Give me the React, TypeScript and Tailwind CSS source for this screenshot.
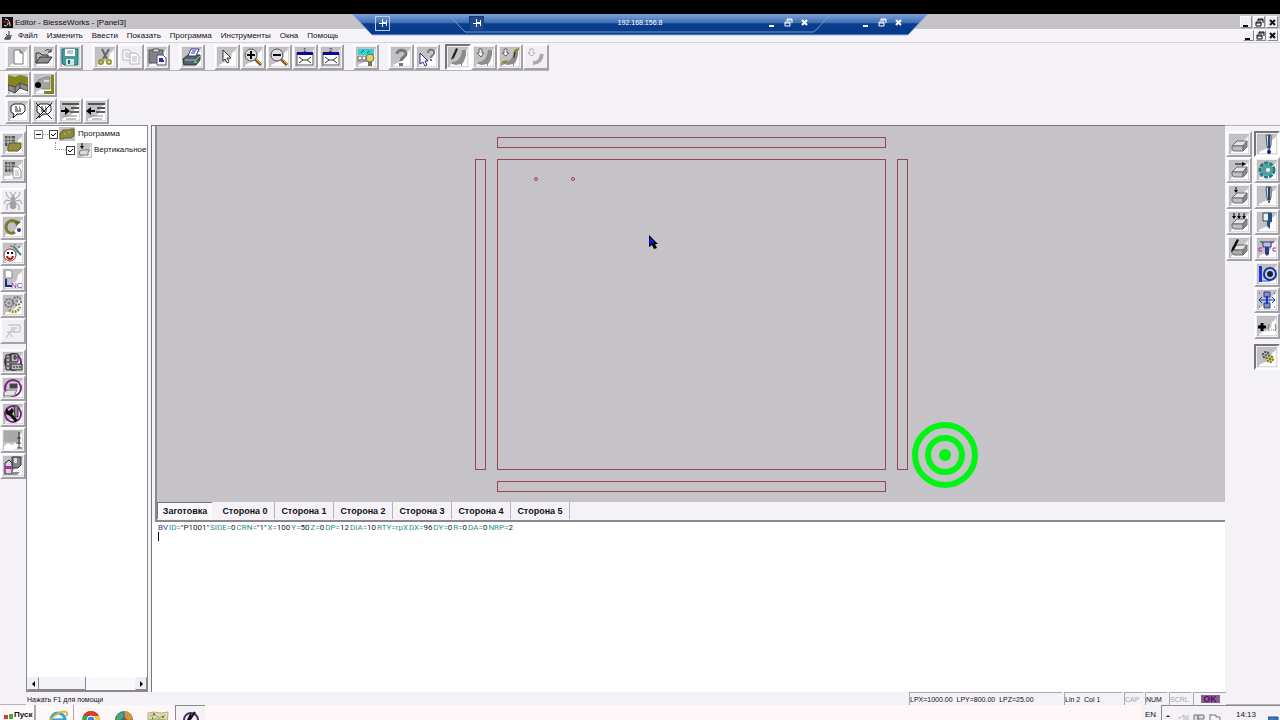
import type { ReactNode } from "react";

type ToolItem = {
  label: string;
  art: ReactNode;
  pressed?: boolean;
  plain?: boolean;
};

/* ---------- Shared pieces of the icon artwork ---------- */

const Block = ({ fill = "#bfbdbf" }: { fill?: string }) => (
  <g stroke="#6f6d70" strokeWidth="1">
    <path d="M3 12L8 7H18L14 12Z" fill="#e4e2e5" />
    <path d="M3 12H14V17H5L3 15Z" fill={fill} />
    <path d="M14 12L18 7V13L14 17Z" fill="#8b898b" />
  </g>
);

const Swoosh = () => (
  <path d="M4 15C9 15 13 12 14 3H18L18 8C17 12 16 15 14 17V19H13V17L8 18L4 17Z" fill="#8d8b8d" />
);

const Zoomer = ({ plus }: { plus?: boolean }) => (
  <g>
    <path d="M12 12L18 18" stroke="#8a4b12" strokeWidth="3" />
    <path d="M13 12L19 18" stroke="#e0b060" strokeWidth="1" />
    <circle cx="8" cy="8" r="6" fill="#dedcde" stroke="#555" strokeWidth="1" />
    <path d={plus ? "M4 8H12M8 4V12" : "M4 8H12"} stroke="#000" strokeWidth="2" />
  </g>
);

const ViewWindow = ({ n }: { n: string }) => (
  <g>
    <text x="8" y="5" fill="#222" className="font-['Liberation_Sans'] text-[6px]">
      {n}
    </text>
    <rect x="2" y="6" width="16" height="12" fill="#fff" stroke="#555" strokeWidth="1" />
    <rect x="2" y="5" width="16" height="3" fill="#0a0a9a" />
    <path d="M4 10L8 13L4 16M16 10L12 13L16 16M8 13H12" fill="none" stroke="#333" strokeWidth="1" />
  </g>
);

const Bubble = () => (
  <g>
    <path d="M3 5L6 3H14L17 5V10L14 13H9L5 17L6 13L3 11Z" fill="#fff" stroke="#222" strokeWidth="1" />
    <path d="M7 6H9M11 6H12M7 8H10M7 10H13M11 8H13" stroke="#222" strokeWidth="1" />
  </g>
);

const Indent = ({ left }: { left?: boolean }) => (
  <g strokeWidth="2">
    <path d="M2 3H19M11 7H19" stroke="#555" />
    <path d="M10 11H19" stroke="#666" />
    <path d="M3 15H17M6 18H16" stroke="#888" strokeWidth="1" />
    <path d="M1 10H9" stroke="#000" />
    <path d={left ? "M0 10L5 6V14Z" : "M10 10L5 6V14Z"} fill="#000" />
  </g>
);

const GridSheet = () => (
  <g>
    <rect x="2" y="2" width="10" height="10" fill="#555" />
    <path d="M2 5H12M2 8H12M5 2V12M8 2V12" stroke="#c8c6c8" strokeWidth="1" />
  </g>
);

const PurpleRing = () => (
  <circle cx="10" cy="10" r="8" fill="none" stroke="#7b1f86" strokeWidth="2" />
);

const Drill = ({ tip = "#234e8a" }: { tip?: string }) => (
  <g>
    <path d="M9 1H14V11L12 17L10 12Z" fill="#cfe0ea" stroke="#555" strokeWidth="1" />
    <path d="M12 1V14" stroke={tip} strokeWidth="2" />
  </g>
);

/* ---------- Toolbars ---------- */

const fileTools: ToolItem[][] = [
  [
    {
      label: "Новый",
      art: <path d="M6 3H12L15 6V17H6ZM12 3V6H15" fill="#fff" stroke="#777" strokeWidth="1" />,
    },
    {
      label: "Открыть",
      art: (
        <g stroke="#333" strokeWidth="1">
          <path d="M2 16V6H6L8 8H14V10" fill="#b5b3b5" />
          <path d="M2 16L6 10H18L14 16Z" fill="#8f8d8f" />
          <path d="M11 4C13 2 15 2 17 5M17 2V5H14" fill="none" />
        </g>
      ),
    },
    {
      label: "Сохранить",
      art: (
        <g>
          <path d="M2 2H18V18H4L2 16Z" fill="#3f9d9e" stroke="#1d6b6d" strokeWidth="1" />
          <path d="M5 2H15V9H5Z" fill="#fff" />
          <path d="M7 4H13M7 6H13" stroke="#888" strokeWidth="1" />
          <path d="M6 12H14V18H6Z" fill="#d8e6e6" />
          <path d="M8 13H10V17H8Z" fill="#1d6b6d" />
        </g>
      ),
    },
  ],
  [
    {
      label: "Вырезать",
      art: (
        <g fill="none">
          <path d="M7 2L12 12M14 2L8 12" stroke="#666" strokeWidth="2" />
          <circle cx="6" cy="15" r="2" stroke="#96962c" strokeWidth="2" />
          <circle cx="14" cy="15" r="2" stroke="#96962c" strokeWidth="2" />
        </g>
      ),
    },
    {
      label: "Копировать",
      plain: true,
      art: (
        <g fill="#fff" stroke="#b5b3b8" strokeWidth="1">
          <path d="M2 3H8L11 6V13H2Z" />
          <path d="M4 6H8M4 8H9M4 10H9" />
          <path d="M9 6H15L18 9V17H9ZM11 10H16M11 12H16M11 14H16" />
        </g>
      ),
    },
    {
      label: "Вставить",
      art: (
        <g>
          <path d="M2 3H16V16H2Z" fill="#858388" stroke="#555" strokeWidth="1" />
          <path d="M6 2H12V5H6Z" fill="#ddd" stroke="#555" strokeWidth="1" />
          <path d="M10 8H16L19 11V18H10Z" fill="#fff" stroke="#4a4a86" strokeWidth="1" />
          <path d="M12 12H16M12 14H17" stroke="#2d2d93" strokeWidth="2" />
        </g>
      ),
    },
  ],
  [
    {
      label: "Печать",
      art: (
        <g>
          <path d="M1 12L6 8H18V13L14 18H2Z" fill="#54636b" stroke="#333" strokeWidth="1" />
          <path d="M3 13H14L18 9" fill="none" stroke="#aac0c4" strokeWidth="1" />
          <path d="M6 9L9 2H17L14 9Z" fill="#fff" stroke="#2b3c8c" strokeWidth="1" />
          <path d="M10 4H14M9 6H13" stroke="#2b3c8c" strokeWidth="1" />
          <path d="M12 15H15" stroke="#5bc35b" strokeWidth="2" />
        </g>
      ),
    },
  ],
  [
    {
      label: "Выбор",
      art: <path d="M6 3L14 11H10L12 15L10 16L8 12L6 14Z" fill="#fff" stroke="#333" strokeWidth="1" />,
    },
    { label: "Увеличить", art: <Zoomer plus /> },
    { label: "Уменьшить", art: <Zoomer /> },
    { label: "Вид 1", art: <ViewWindow n="1" /> },
    { label: "Вид 2", art: <ViewWindow n="2" /> },
  ],
  [
    {
      label: "Станок",
      art: (
        <g>
          <path d="M2 2H18V8H2Z" fill="#2fd0d0" />
          <path d="M5 6L8 3M11 6L13 4" stroke="#155" strokeWidth="1" />
          <path d="M1 9H13V15H1Z" fill="#9b999b" />
          <path d="M3 11H5M7 11H9" stroke="#fff" strokeWidth="2" />
          <circle cx="14" cy="11" r="4" fill="#d4cf7c" stroke="#75723a" strokeWidth="1" />
          <path d="M12 15H16V19H12Z" fill="#76734e" />
        </g>
      ),
    },
  ],
  [
    {
      label: "Справка",
      art: (
        <g>
          <path d="M6 7C6 2 15 2 15 7C15 10 10 10 10 14" fill="none" stroke="#777" strokeWidth="3" />
          <path d="M8 16H12V19H8Z" fill="#777" />
        </g>
      ),
    },
    {
      label: "Что это?",
      art: (
        <g>
          <path d="M11 6C11 1 18 2 17 6C17 8 14 8 14 11" fill="none" stroke="#777" strokeWidth="2" />
          <path d="M13 13H15" stroke="#777" strokeWidth="2" />
          <path d="M3 6L11 14H8L10 18L8 19L6 15L3 17Z" fill="#fff" stroke="#2b2b93" strokeWidth="1" />
        </g>
      ),
    },
  ],
];

const drawTools: ToolItem[] = [
  {
    label: "Профиль",
    pressed: true,
    art: (
      <g>
        <Swoosh />
        <path d="M3 13L4 10L8 1L10 2L6 11Z" fill="#222" />
      </g>
    ),
  },
  {
    label: "Вход",
    art: (
      <g>
        <Swoosh />
        <path d="M5 2H8V6H10L7 10L3 6H5Z" fill="#eee" stroke="#666" strokeWidth="1" />
      </g>
    ),
  },
  {
    label: "Выход",
    art: (
      <g>
        <Swoosh />
        <path d="M4 2H7V6H9L6 9L2 6H4Z" fill="#eee" stroke="#666" strokeWidth="1" />
        <path d="M2 18L3 15L7 14M14 8L16 3L19 2" fill="none" stroke="#8f8a22" strokeWidth="2" />
        <path d="M15 5L14 11" stroke="#222" strokeWidth="1" />
      </g>
    ),
  },
  {
    label: "Дуга",
    plain: true,
    art: (
      <g>
        <path d="M7 16C13 16 15 13 16 7" fill="none" stroke="#aaa8ac" strokeWidth="4" />
        <path d="M4 2H7V6H9L6 9L2 6H4Z" fill="#fff" stroke="#b0aeb3" strokeWidth="1" />
      </g>
    ),
  },
];

const viewTools: ToolItem[] = [
  {
    label: "Заготовка",
    art: (
      <g>
        <path d="M0 1L7 3L12 1L20 3V12L12 9L7 13L0 11Z" fill="#85851b" />
        <path d="M0 11L7 13L12 9L20 12V17L12 14L7 19L0 16Z" fill="#8e8c8e" stroke="#444" strokeWidth="1" />
        <path d="M7 13V19M12 9V14" stroke="#444" strokeWidth="1" />
      </g>
    ),
  },
  {
    label: "Инструмент",
    art: (
      <g>
        <path d="M17 1H20V20H10V17H17Z" fill="#85851b" />
        <path d="M4 6L12 3H16V15H9L4 12Z" fill="#a5a3a5" stroke="#888" strokeWidth="1" />
        <path d="M10 6H15V8H10Z" fill="#ddd" />
        <circle cx="4" cy="11" r="3" fill="#000" />
      </g>
    ),
  },
];

const noteTools: ToolItem[] = [
  { label: "Комментарий", art: <Bubble /> },
  {
    label: "Убрать комментарий",
    art: (
      <g>
        <Bubble />
        <path d="M2 2L18 18M18 2L2 18" stroke="#222" strokeWidth="1" />
      </g>
    ),
  },
  { label: "Увеличить отступ", art: <Indent /> },
  { label: "Уменьшить отступ", art: <Indent left /> },
];

const sideTools: ToolItem[][] = [
  [
    {
      label: "Таблица",
      art: (
        <g>
          <GridSheet />
          <path d="M5 12L8 9H18V14L15 17H5Z" fill="#929040" stroke="#5d5c21" strokeWidth="1" />
        </g>
      ),
    },
    {
      label: "Список",
      art: (
        <g>
          <GridSheet />
          <path d="M10 7H15L18 10V18H10Z" fill="#fff" stroke="#888" strokeWidth="1" />
          <path d="M12 11H16M12 13H16M12 15H16" stroke="#aaa" strokeWidth="1" />
          <path d="M1 17C4 14 7 18 10 16V19H1Z" fill="#fff" />
        </g>
      ),
    },
  ],
  [
    {
      label: "Отладка",
      plain: true,
      art: (
        <g fill="#a3a1a6" stroke="#a3a1a6" strokeWidth="1">
          <ellipse cx="10" cy="14" rx="3" ry="4" />
          <circle cx="10" cy="8" r="2" />
          <circle cx="10" cy="5" r="1" />
          <path d="M8 8L4 5L3 1M12 8L16 5L17 1M8 10L3 9L1 13M12 10L17 9L19 13M8 11L4 14L4 19M12 11L16 14L16 19M9 4L7 1M11 4L13 1" fill="none" />
        </g>
      ),
    },
    {
      label: "Повтор",
      art: (
        <g>
          <path d="M14 6C9 1 3 5 3 10C3 15 8 18 12 15" fill="none" stroke="#7e7c32" strokeWidth="3" />
          <path d="M12 3L18 5L13 9Z" fill="#66642c" />
          <circle cx="16" cy="13" r="2" fill="#3a2c93" />
        </g>
      ),
    },
    {
      label: "Мастер",
      art: (
        <g>
          <circle cx="7" cy="12" r="6" fill="#fff" stroke="#8a3b3b" strokeWidth="1" />
          <path d="M4 13C5 17 9 17 10 13" fill="none" stroke="#b01717" strokeWidth="2" />
          <path d="M5 9V11M9 9V11" stroke="#000" strokeWidth="2" />
          <path d="M10 3L18 12" stroke="#3a8a93" strokeWidth="2" />
          <path d="M12 1V2M16 3V5M7 3H9" stroke="#b33" strokeWidth="1" />
        </g>
      ),
    },
    {
      label: "NC",
      art: (
        <g>
          <path d="M2 1H7L9 3V9H2Z" fill="#fff" stroke="#888" strokeWidth="1" />
          <path d="M3 10V17H9" fill="none" stroke="#1e2c8c" strokeWidth="2" />
          <text x="8" y="19" fill="#6c1d8c" className="font-['Liberation_Sans'] text-[8px]">
            NC
          </text>
        </g>
      ),
    },
    {
      label: "Оптимизация",
      art: (
        <g fill="none" strokeWidth="2">
          <circle cx="6" cy="8" r="4" stroke="#77757a" strokeDasharray="2 1" />
          <circle cx="6" cy="8" r="1" stroke="#77757a" strokeWidth="1" />
          <circle cx="14" cy="6" r="4" stroke="#77757a" strokeDasharray="2 1" />
          <circle cx="14" cy="6" r="1" stroke="#77757a" strokeWidth="1" />
          <path d="M6 15C10 18 15 17 17 12" stroke="#98962f" strokeWidth="3" strokeDasharray="2 1" />
        </g>
      ),
    },
    {
      label: "Симуляция",
      plain: true,
      art: (
        <g fill="none" stroke="#b6b4b9" strokeWidth="1">
          <path d="M5 4H17V11H8M8 7H14M8 9H12" />
          <path d="M8 10L3 17M6 12L10 16M4 11L8 11" />
        </g>
      ),
    },
  ],
  [
    {
      label: "База инструментов",
      art: (
        <g>
          <PurpleRing />
          <path d="M3 3H7V18H3ZM8 2H15V10H8ZM8 12H19V18H8Z" fill="#bbb9bb" stroke="#222" strokeWidth="1" />
          <path d="M4 6H6M4 10H6M4 14H6M11 4H13V7H11ZM11 14V16M14 14V16M17 14V16" fill="none" stroke="#222" strokeWidth="1" />
        </g>
      ),
    },
    {
      label: "Станция",
      art: (
        <g>
          <PurpleRing />
          <path d="M6 5H15V11H6Z" fill="#444" stroke="#ddd" strokeWidth="1" />
          <path d="M1 14L5 12H14L11 18H1Z" fill="#e5e3e5" stroke="#777" strokeWidth="1" />
        </g>
      ),
    },
    {
      label: "Настройка",
      art: (
        <g>
          <PurpleRing />
          <path d="M3 4L6 7L9 4L11 7L9 10L15 16L12 18L7 12L3 10Z" fill="#111" />
          <path d="M11 2H15V13H12Z" fill="#8f8d8f" stroke="#333" strokeWidth="1" />
        </g>
      ),
    },
    {
      label: "Разметка",
      art: (
        <g>
          <path d="M1 1H17V12H1Z" fill="#aaa8ab" />
          <path d="M1 16L5 13L11 16V20H1Z" fill="#fff" />
          <path d="M16 2V18M14 8H18M13 13H18M14 18H19" stroke="#333" strokeWidth="1" />
        </g>
      ),
    },
    {
      label: "Экспорт",
      art: (
        <g>
          <path d="M9 1H18V9L15 12H9Z" fill="#858388" stroke="#333" strokeWidth="1" />
          <path d="M11 2H14V7H11Z" fill="#ddd" />
          <path d="M2 7L6 4L9 7V18H2Z" fill="#d8d6d9" stroke="#222" strokeWidth="1" />
          <path d="M2 10H8V13H2Z" fill="#c01fc0" />
          <path d="M10 16H17L14 19H9Z" fill="#8d8b8d" />
        </g>
      ),
    },
  ],
];

const faceTools: ToolItem[] = [
  { label: "Деталь", art: <Block /> },
  {
    label: "Сверление сбоку",
    art: (
      <g>
        <Block />
        <path d="M6 4H14" stroke="#000" strokeWidth="1" />
        <path d="M13 2L17 4L13 6Z" fill="#000" />
      </g>
    ),
  },
  {
    label: "Вертикальное сверление",
    art: (
      <g>
        <Block />
        <path d="M7 1V5" stroke="#000" strokeWidth="1" />
        <path d="M5 4H9L7 7Z" fill="#000" />
      </g>
    ),
  },
  {
    label: "Групповое сверление",
    art: (
      <g>
        <Block />
        <path d="M5 1V5M10 1V5M15 1V5" stroke="#000" strokeWidth="1" />
        <path d="M3 4H7L5 7ZM8 4H12L10 7ZM13 4H17L15 7Z" fill="#000" />
      </g>
    ),
  },
  {
    label: "Фрезерование",
    art: (
      <g>
        <Block fill="#aaa8aa" />
        <path d="M2 14L3 10L8 1L10 2L5 12Z" fill="#111" />
      </g>
    ),
  },
];

const cutterTools: ToolItem[] = [
  {
    label: "Сверло",
    pressed: true,
    art: (
      <g>
        <Drill />
        <circle cx="12" cy="18" r="2" fill="#15158f" />
      </g>
    ),
  },
  {
    label: "Пила",
    art: (
      <g>
        <circle cx="10" cy="10" r="7" fill="none" stroke="#237b7e" strokeWidth="3" strokeDasharray="4 1" />
        <circle cx="10" cy="10" r="6" fill="#4f9fa3" />
        <circle cx="11" cy="10" r="2" fill="#fff" />
      </g>
    ),
  },
  { label: "Фреза", art: <Drill tip="#1d4b6d" /> },
  {
    label: "Концевая фреза",
    art: (
      <g>
        <path d="M6 1H14V9H6Z" fill="#e8eef2" stroke="#444" strokeWidth="1" />
        <path d="M11 1H15V10H13V17L10 14V9H11Z" fill="#1f4f86" />
      </g>
    ),
  },
  {
    label: "Агрегат",
    art: (
      <g>
        <path d="M6 4H14V9H6Z" fill="#bcc2dc" stroke="#2e3c8c" strokeWidth="1" />
        <path d="M8 9H12V16L10 18L8 16Z" fill="#2e3c8c" />
        <path d="M3 4H6M14 4H17" stroke="#333" strokeWidth="1" />
        <path d="M5 10H2V13H5M19 10H16V13H19" fill="none" stroke="#b01fb0" strokeWidth="1" />
      </g>
    ),
  },
  {
    label: "Упор",
    art: (
      <g>
        <path d="M2 2H5V18H2Z" fill="#1236d8" />
        <circle cx="13" cy="10" r="6" fill="#cfcdd2" stroke="#1236a8" strokeWidth="2" />
        <circle cx="13" cy="10" r="3" fill="#16203c" />
        <path d="M5 17H13" stroke="#1236d8" strokeWidth="1" />
      </g>
    ),
  },
  {
    label: "Зажим",
    art: (
      <g>
        <path d="M7 2H13V7H7ZM7 13H13V18H7Z" fill="#8592ae" stroke="#243c9c" strokeWidth="1" />
        <path d="M9 6H11V14H9Z" fill="#1236c8" />
        <path d="M3 10H17" stroke="#1236c8" strokeWidth="1" />
        <path d="M5 7L2 10L5 13M15 7L18 10L15 13" fill="none" stroke="#1236c8" strokeWidth="1" />
        <path d="M2 3H3M17 3H18M2 17H3M17 17H18" stroke="#1236c8" strokeWidth="1" />
      </g>
    ),
  },
  {
    label: "Добавить",
    art: (
      <g>
        <path d="M1 11H9M5 7V15" stroke="#000" strokeWidth="3" />
        <path d="M12 8L11 12L12 15M18 8L19 12L18 15M14 14H15M16 14H17" fill="none" stroke="#777" strokeWidth="1" />
      </g>
    ),
  },
];

const gearTool: ToolItem = {
  label: "Параметры",
  pressed: true,
  art: (
    <g fill="none" strokeWidth="2">
      <circle cx="9" cy="8" r="3" fill="#ddd" stroke="#444" strokeDasharray="2 1" />
      <circle cx="13" cy="12" r="3" fill="#e9e67a" stroke="#7e7b1c" strokeDasharray="2 1" />
      <circle cx="9" cy="8" r="1" stroke="#444" strokeWidth="1" />
      <circle cx="13" cy="12" r="1" stroke="#555310" strokeWidth="1" />
    </g>
  ),
};

function Tool({ label, art, pressed, plain }: ToolItem) {
  const edge = pressed
    ? "border-t-[#77757a] border-l-[#77757a] border-r-white border-b-white"
    : "border-t-[#fcfcfd] border-l-[#fcfcfd] border-r-[#a3a1a6] border-b-[#a3a1a6]";
  return (
    <button
      type="button"
      aria-label={label}
      title={label}
      className={`box-border flex h-[26px] w-[26px] shrink-0 items-center justify-center border-2 bg-[#f1eff4] ${edge}`}
    >
      <svg viewBox="0 0 20 20" className="h-5 w-5">
        {!plain && (
          <g>
            <rect width="20" height="20" fill="#fdfdfd" />
            <path d="M0 0H20L18 4L15 6L14 11L11 14L6 16L2 18V20H0Z" fill="#c3c1c4" />
            <path d="M0 20V0H20V20Z" fill="none" stroke="#b9b7bb" strokeWidth="1" />
          </g>
        )}
        {art}
      </svg>
    </button>
  );
}

function ToolRow({ items }: { items: ToolItem[] }) {
  return (
    <div className="flex">
      {items.map((t) => (
        <Tool key={t.label} {...t} />
      ))}
    </div>
  );
}

/* ---------- Window chrome ---------- */

const glyphs: Record<string, string> = {
  Свернуть: "M1 8H6",
  Развернуть: "M3 1H8V5M3 1V3M1 4H6V8H1ZM3 2H8M1 5H6",
  Закрыть: "M2 2L7 7M7 2L2 7",
};

function WindowButtons({ small }: { small?: boolean }) {
  return (
    <div className="flex items-center gap-px">
      {Object.entries(glyphs).map(([label, d]) => (
        <button
          key={label}
          type="button"
          aria-label={label}
          className={`flex items-center justify-center border border-t-white border-l-white border-r-[#8a888c] border-b-[#8a888c] bg-[#f1eff4] ${small ? "h-[11px] w-[11px]" : "h-3 w-3"}`}
        >
          <svg viewBox="0 0 9 9" className="h-[9px] w-[9px]">
            <path d={d} fill="none" stroke="#111" strokeWidth={label === "Развернуть" ? 1 : 2} />
          </svg>
        </button>
      ))}
    </div>
  );
}

function RemoteButtons() {
  return (
    <div className="flex items-center gap-1.5">
      {Object.entries(glyphs).map(([label, d]) => (
        <button key={label} type="button" aria-label={label} className="h-[10px] w-[10px]">
          <svg viewBox="0 0 10 10" className="h-[10px] w-[10px]">
            <path d={d} fill="none" stroke="#fff" strokeWidth={label === "Развернуть" ? 1 : 2} />
          </svg>
        </button>
      ))}
    </div>
  );
}

function PinButton({ framed }: { framed?: boolean }) {
  return (
    <button
      type="button"
      aria-label="Закрепить"
      className={`flex h-[15px] w-[15px] items-center justify-center border ${framed ? "border-[#b9cbe6]" : "border-[#173a78] bg-[#1f4a90]"}`}
    >
      <svg viewBox="0 0 10 10" className="h-[10px] w-[10px]" shapeRendering="crispEdges">
        <path d="M1 5H4V6H1ZM4 1H5V9H4ZM5 4H9V6H5ZM8 2H9V8H8Z" fill="#fff" />
      </svg>
    </button>
  );
}

function RemoteBar() {
  return (
    <div className="absolute top-[14px] left-1/2 z-10 flex h-[22px] w-[576px] -translate-x-1/2">
      <svg viewBox="0 0 576 22" className="absolute inset-0 h-[22px] w-[576px]">
        <defs>
          <linearGradient id="bar" x1="0" y1="0" x2="0" y2="1">
            <stop offset="0" stopColor="#7ea3d8" />
            <stop offset="0.43" stopColor="#3d6cb3" />
            <stop offset="0.46" stopColor="#0a3f8f" />
            <stop offset="1" stopColor="#053a8c" />
          </linearGradient>
        </defs>
        <path d="M0 0H576L556 21H20Z" fill="url(#bar)" />
        <path d="M0 0L20 21H556L576 0" fill="none" stroke="#9db4d6" strokeWidth="1" />
        <path d="M96 0L113 18H462L479 0" fill="none" stroke="#7d9cc9" strokeWidth="1" />
      </svg>
      <div className="relative flex h-[18px] w-full items-center pr-6 pl-[23px]">
        <PinButton framed />
        <div className="ml-[79px] flex w-[341px] items-center">
          <PinButton />
          <span className="flex-1 pl-7 text-center text-[7px] leading-[10px] text-white">192.168.156.8</span>
          <RemoteButtons />
        </div>
        <div className="ml-auto">
          <RemoteButtons />
        </div>
      </div>
    </div>
  );
}

const menus = ["Файл", "Изменить", "Ввести", "Показать", "Программа", "Инструменты", "Окна", "Помощь"];

function Header() {
  return (
    <header>
      <div className="h-[14px] bg-black" />
      <div className="flex h-[15px] items-center bg-[#c5c3c7] px-0.5 pt-px">
        <svg viewBox="0 0 11 11" className="h-[11px] w-[11px]">
          <rect width="11" height="11" fill="#111" />
          <path d="M3 2C6 2 8 4 8 9M2 8C4 10 6 8 6 6" fill="none" stroke="#fff" strokeWidth="1" />
          <path d="M1 5H7" stroke="#d22" strokeWidth="1" />
        </svg>
        <h1 className="ml-0.5 flex-1 text-[8px] leading-[11px]">Editor - BiesseWorks - [Panel3]</h1>
        <WindowButtons />
      </div>
      <div className="flex h-[13px] items-center bg-[#f6f4f9] pr-0.5 pl-[3px]">
        <svg viewBox="0 0 10 10" className="h-[10px] w-[10px]">
          <path d="M1 8L4 4H9L7 9H2Z" fill="#777" />
          <path d="M6 0V5M3 3L5 5M2 7H8" stroke="#333" strokeWidth="1" />
        </svg>
        <nav className="ml-[5px] flex flex-1 gap-[9px]">
          {menus.map((m) => (
            <button key={m} type="button" className="text-[8px] leading-[10px]">
              {m}
            </button>
          ))}
        </nav>
        <WindowButtons small />
      </div>
    </header>
  );
}

function Toolbars() {
  return (
    <div className="border-t border-[#d5d3d8] bg-[#f4f2f7] pb-px">
      <div className="flex h-7 w-[549px] items-center gap-[5px] border-b border-[#b5b3b8] pl-[5px]">
        <div className="flex gap-[9px]">
          {fileTools.map((group) => (
            <ToolRow key={group[0].label} items={group} />
          ))}
        </div>
        <ToolRow items={drawTools} />
      </div>
      <div className="flex h-[27px] items-start pl-[5px]">
        <ToolRow items={viewTools} />
      </div>
      <div className="flex h-[26px] items-start pl-[5px]">
        <ToolRow items={noteTools} />
      </div>
    </div>
  );
}

/* ---------- Program tree ---------- */

function TreeCheck({ id }: { id: string }) {
  return (
    <span className="relative flex h-[9px] w-[9px] shrink-0">
      <input
        id={id}
        type="checkbox"
        defaultChecked
        className="peer h-[9px] w-[9px] appearance-none border border-[#444] bg-white"
      />
      <svg viewBox="0 0 9 9" className="pointer-events-none absolute inset-0 hidden h-[9px] w-[9px] peer-checked:block">
        <path d="M2 4L4 6L7 3" fill="none" stroke="#000" strokeWidth="1" />
      </svg>
    </span>
  );
}

function ProgramTree() {
  return (
    <aside className="flex w-[122px] shrink-0 flex-col border-t border-r border-b-2 border-l border-[#8a888c] bg-white">
      <ul className="flex-1 overflow-hidden text-[8px] leading-4">
        <li>
          <div className="flex h-4 items-center pl-[7px]">
            <button
              type="button"
              aria-label="Свернуть ветвь"
              className="flex h-[9px] w-[9px] items-center justify-center border border-[#8a888c]"
            >
              <span className="h-px w-[5px] bg-black" />
            </button>
            <span className="mr-px w-[5px] border-t border-dotted border-[#999]" />
            <TreeCheck id="node-program" />
            <svg viewBox="0 0 16 14" className="ml-px h-[14px] w-4">
              <rect width="16" height="14" fill="#c5c3c7" />
              <path d="M1 6L4 3H10L12 2H15V9L12 11H6L4 12H1Z" fill="#8a8a3a" stroke="#63632a" strokeWidth="1" />
              <path d="M5 7H7M9 5H11" stroke="#c2c284" strokeWidth="1" />
            </svg>
            <label htmlFor="node-program" className="ml-[3px]">
              Программа
            </label>
          </div>
          <ul>
            <li className="flex h-4 items-center pl-7">
              <span className="mb-2 h-2 w-[11px] shrink-0 border-b border-l border-dotted border-[#999]" />
              <TreeCheck id="node-vertical" />
              <svg viewBox="0 0 15 15" className="ml-0.5 h-[15px] w-[15px] shrink-0">
                <rect width="15" height="15" fill="#c5c3c7" />
                <path d="M14 1V14H5L12 8Z" fill="#eee" />
                <path d="M2 9L5 7H13L11 9V12H3Z" fill="#ddd" stroke="#777" strokeWidth="1" />
                <path d="M5 0V4" stroke="#000" strokeWidth="1" />
                <path d="M3 3H7L5 6Z" fill="#000" />
              </svg>
              <label htmlFor="node-vertical" className="ml-0.5 whitespace-nowrap">
                Вертикальное
              </label>
            </li>
          </ul>
        </li>
      </ul>
      <div className="flex h-[13px] bg-[#f9f8fb]">
        <button
          type="button"
          aria-label="Влево"
          className="flex w-3 items-center justify-center border border-transparent border-r-[#8a888c] border-b-[#8a888c] bg-[#f1eff4]"
        >
          <svg viewBox="0 0 5 6" className="h-[6px] w-[5px]">
            <path d="M4 0V6L1 3Z" />
          </svg>
        </button>
        <div className="w-[47px] border-r border-b border-[#8a888c] bg-[#f4f2f7]" />
        <button
          type="button"
          aria-label="Вправо"
          className="ml-auto flex w-3 items-center justify-center border border-transparent border-r-[#8a888c] border-b-[#8a888c] bg-[#f1eff4]"
        >
          <svg viewBox="0 0 5 6" className="h-[6px] w-[5px]">
            <path d="M1 0V6L4 3Z" />
          </svg>
        </button>
      </div>
    </aside>
  );
}

/* ---------- Drawing and code ---------- */

function PanelDrawing() {
  return (
    <svg viewBox="0 0 432 356" className="mt-[10px] h-[356px] w-[432px] overflow-visible">
      {/* half-unit shift keeps the hairlines on whole pixels */}
      <g fill="none" stroke="#9a4650" strokeWidth="1" transform="translate(0.5 0.5)">
        <rect x="22" y="1" width="388" height="10" />
        <rect x="0" y="23" width="10" height="310" />
        <rect x="22" y="23" width="388" height="310" />
        <rect x="422" y="23" width="10" height="310" />
        <rect x="22" y="345" width="388" height="10" />
      </g>
      <g fill="none" stroke="#a03a6c" strokeWidth="1">
        <circle cx="61" cy="43" r="1.5" />
        <circle cx="98" cy="43" r="1.5" />
      </g>
      {/* mouse pointer */}
      <path d="M174 99V111L177 109L179 113L182 112L180 108H183Z" fill="#000" />
      <path d="M175 102V108L177 107L179 106Z" fill="#1414e0" stroke="#1414e0" strokeWidth="1" />
      {/* click marker */}
      <g fill="none" stroke="#00f514" strokeWidth="6">
        <circle cx="470" cy="319" r="30" />
        <circle cx="470" cy="319" r="17" />
        <circle cx="470" cy="319" r="6" fill="#00f514" stroke="none" />
      </g>
    </svg>
  );
}

const sides = ["Заготовка", "Сторона 0", "Сторона 1", "Сторона 2", "Сторона 3", "Сторона 4", "Сторона 5"];

const params: [string, string][] = [
  ["ID", '"P1001"'],
  ["SIDE", "0"],
  ["CRN", '"1"'],
  ["X", "100"],
  ["Y", "50"],
  ["Z", "0"],
  ["DP", "12"],
  ["DIA", "10"],
  ["RTY", "rpX"],
  ["DX", "96"],
  ["DY", "0"],
  ["R", "0"],
  ["DA", "0"],
  ["NRP", "2"],
];

function Workspace() {
  return (
    <main className="ml-[3px] flex min-w-0 flex-1 flex-col border-t border-l border-[#77757a] bg-[#f4f2f7]">
      <section className="ml-[3px] flex h-[376px] justify-center overflow-hidden border-l-2 border-[#8a888c] bg-[#c5c3c7]">
        <PanelDrawing />
      </section>
      <div role="tablist" className="ml-[3px] flex h-5 items-start border-b-2 border-l-2 border-[#8a888c]">
        {sides.map((s, i) => (
          <button
            key={s}
            type="button"
            role="tab"
            aria-selected={i === 0}
            className={
              i === 0
                ? "mr-1 h-[17px] w-[55px] border-t border-l border-[#77757a] bg-[#faf9fc] text-center text-[9px] leading-4 font-bold"
                : "h-[17px] w-[59px] border-r border-[#b5b3b8] text-center text-[9px] leading-4 font-bold"
            }
          >
            {s}
          </button>
        ))}
      </div>
      <div className="flex-1 bg-white pt-px pl-1.5 font-['Roboto','Liberation_Sans',sans-serif] text-[8px] leading-[9px] text-[#222]">
        <p className="flex gap-px whitespace-nowrap">
          <span className="text-[#4530a8]">BV</span>
          {params.map(([key, value]) => (
            <span key={key}>
              <span className="text-[#2b9090]">{key}=</span>
              {key === "RTY" ? <span className="text-[#2b9090]">{value}</span> : value}
            </span>
          ))}
        </p>
        <div className="h-[9px] w-px bg-black" />
      </div>
    </main>
  );
}

function StatusBar() {
  return (
    <footer className="flex h-[13px] shrink-0 items-stretch bg-[#f4f2f7] text-[7px] leading-[13px] whitespace-nowrap">
      <div className="w-[26px] border-b border-[#b5b3b8]" />
      <p className="flex-1 pt-px pl-px">Нажать F1 для помощи</p>
      <p className="mr-0.5 w-[153px] border-t border-l border-[#aaa8ad]">LPX=1000.00&nbsp; LPY=800.00&nbsp; LPZ=25.00</p>
      <p className="mr-0.5 w-[58px] border-t border-l border-[#aaa8ad]">Lin 2&nbsp; Col 1</p>
      <p className="mr-0.5 w-[19px] border-t border-l border-[#aaa8ad] text-[#aaa8ad]">CAP</p>
      <p className="mr-0.5 w-[22px] border-t border-l border-[#aaa8ad]">NUM</p>
      <p className="mr-0.5 w-[22px] border-t border-l border-[#aaa8ad] text-[#aaa8ad]">SCRL</p>
      <div className="flex w-[33px] items-center justify-center border-t border-l border-[#aaa8ad]">
        <span className="h-2 w-[19px] bg-[#85638c] text-center text-[9px] leading-2 font-bold text-[#5c0a6c]">OK</span>
      </div>
      <div className="w-[54px] border-b border-[#b5b3b8]" />
    </footer>
  );
}

function Taskbar() {
  return (
    <div className="flex h-[15px] shrink-0 items-start overflow-hidden bg-[#fdf8f7] text-[8px] leading-[9px]">
      <button type="button" className="flex h-[15px] w-9 shrink-0 items-start gap-px border-r-2 border-[#aaa8ad] pt-[5px] pl-1">
        <svg viewBox="0 0 9 9" className="mt-1 h-[9px] w-[9px] shrink-0">
          <path d="M0 1H4V5H0Z" fill="#d93a2c" />
          <path d="M5 0H9V5H5Z" fill="#3fae3f" />
        </svg>
        <span className="font-bold">Пуск</span>
      </button>
      <button type="button" aria-label="Internet Explorer" className="h-6 w-[38px] shrink-0 border-r border-[#aaa8ad] pt-[5px] pl-3">
        <svg viewBox="0 0 20 20" className="h-5 w-5">
          <circle cx="10" cy="10" r="7" fill="none" stroke="#2fa3dc" strokeWidth="3" />
          <path d="M4 10H16" stroke="#2fa3dc" strokeWidth="3" />
          <path d="M1 13C3 7 13 0 18 2C20 3 19 5 18 6" fill="none" stroke="#e3b43c" strokeWidth="2" />
        </svg>
      </button>
      <button type="button" aria-label="Chrome" className="h-6 w-8 shrink-0 pt-[5px] pl-[7px]">
        <svg viewBox="0 0 20 20" className="h-5 w-5">
          <circle cx="10" cy="10" r="9" fill="#3da64b" />
          <path d="M2 6A9 9 0 0 1 18 6H10Z" fill="#d93a2c" />
          <path d="M18 6A9 9 0 0 1 10 19L14 10L10 6Z" fill="#f0c536" />
          <circle cx="10" cy="10" r="4" fill="#4285d8" stroke="#fff" strokeWidth="1" />
        </svg>
      </button>
      <button type="button" aria-label="Глобус" className="h-6 w-8 shrink-0 pt-[5px] pl-2">
        <svg viewBox="0 0 20 20" className="h-5 w-5">
          <circle cx="10" cy="10" r="9" fill="#267b9c" />
          <path d="M10 1C15 1 18 4 19 9L13 11L11 7Z" fill="#d2933a" />
          <path d="M3 5L8 2L10 6L6 10L2 12Z" fill="#4fa86c" />
          <path d="M9 8L14 10L11 16Z" fill="#ab3f2b" />
        </svg>
      </button>
      <button type="button" aria-label="Карта" className="h-6 w-[37px] shrink-0 pt-[5px] pl-[9px]">
        <svg viewBox="0 0 22 18" className="h-[18px] w-[22px]">
          <path d="M1 2L7 1L14 2L21 1L20 16H1Z" fill="#ddd9a8" stroke="#b5b28a" strokeWidth="1" />
          <path d="M3 5L8 4L12 7L18 4M2 9L9 8L19 9" fill="none" stroke="#8cae86" strokeWidth="1" />
          <path d="M6 3H8M15 6H17M5 7H6" stroke="#cf5a45" strokeWidth="2" />
        </svg>
      </button>
      <button type="button" aria-label="BiesseWorks" className="h-6 w-[30px] shrink-0 border-t border-l border-[#8a888c] bg-[#f4f2f7] pt-1 pl-1.5">
        <svg viewBox="0 0 18 18" className="h-[18px] w-[18px]">
          <circle cx="9" cy="9" r="7" fill="none" stroke="#5b2a6c" strokeWidth="2" />
          <path d="M5 11L9 3M7 10L13 1" fill="none" stroke="#111" strokeWidth="2" />
        </svg>
      </button>
      <div className="ml-auto flex h-[15px] shrink-0 items-start bg-[#f4f2f7] pl-1">
        <span className="w-4 pt-[5px]">EN</span>
        <div className="flex h-[15px] items-start gap-2 border-t border-l border-[#8a888c] pt-1 pl-1">
          <svg viewBox="0 0 60 10" className="mt-1 mr-0.5 h-[10px] w-[60px]">
            <path d="M0 3L2 1L4 3Z" fill="#222" />
            <path d="M12 4H14L18 1V9L14 6M20 2V6M22 1V7" fill="none" stroke="#b5b3b8" strokeWidth="1" />
            <path d="M28 1H32V9H28ZM32 1H38V5H32Z" fill="#ddd" stroke="#777" strokeWidth="1" />
            <path d="M44 0V9M44 1H50V3H54V9" fill="none" stroke="#777" strokeWidth="1" />
          </svg>
          <time>14:13</time>
          <svg viewBox="0 0 12 10" className="mt-1.5 ml-1 h-[10px] w-3">
            <path d="M0 1H10V10H0Z" fill="#3f73b8" stroke="#234e8a" strokeWidth="1" />
          </svg>
        </div>
      </div>
    </div>
  );
}

export default function App() {
  return (
    <div className="relative flex h-screen flex-col overflow-hidden bg-[#f4f2f7] font-['Liberation_Sans',Arial,sans-serif] text-[#111]">
      <Header />
      <RemoteBar />
      <Toolbars />
      <div className="flex min-h-0 flex-1">
        {/* Left tool strip */}
        <div className="flex w-[26px] shrink-0 flex-col gap-[5px] border-t border-[#b5b3b8] pt-[5px]">
          {sideTools.map((group) => (
            <div key={group[0].label}>
              {group.map((t) => (
                <Tool key={t.label} {...t} />
              ))}
            </div>
          ))}
        </div>
        <ProgramTree />
        <Workspace />
        {/* Right tool strips */}
        <div className="flex w-[55px] shrink-0 justify-between border-t border-[#b5b3b8] pt-[5px] pl-px">
          <div>
            {faceTools.map((t) => (
              <Tool key={t.label} {...t} />
            ))}
          </div>
          <div>
            {cutterTools.map((t) => (
              <Tool key={t.label} {...t} />
            ))}
            <div className="mt-[5px]">
              <Tool {...gearTool} />
            </div>
          </div>
        </div>
      </div>
      <StatusBar />
      <Taskbar />
    </div>
  );
}
